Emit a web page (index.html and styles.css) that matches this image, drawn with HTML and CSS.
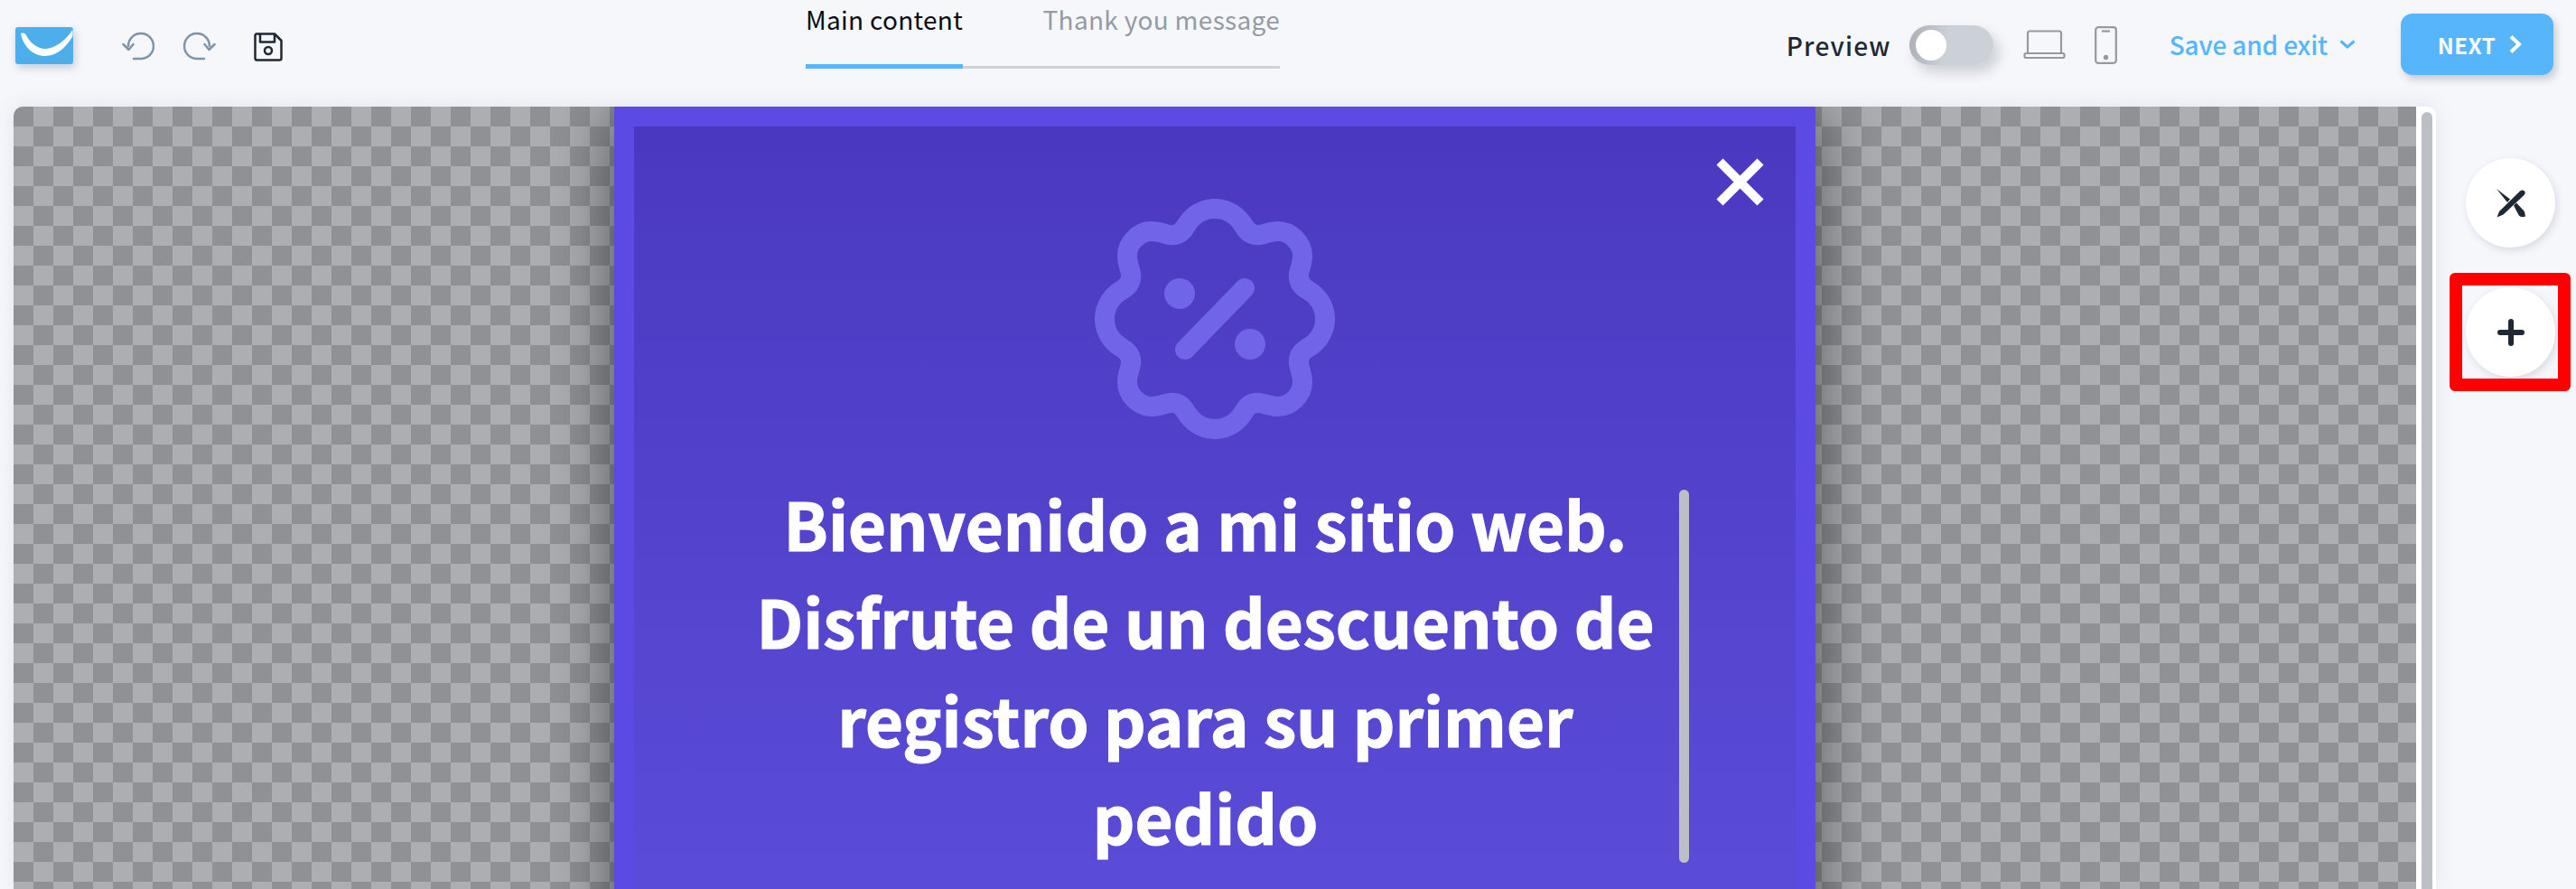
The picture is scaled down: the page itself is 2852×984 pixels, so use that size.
FILE: index.html
```html
<!DOCTYPE html>
<html lang="en">
<head>
    <meta charset="UTF-8">
    <meta name="viewport" content="width=device-width, initial-scale=1.0">
    <title>Popup editor</title>
    <link rel="stylesheet" href="styles.css">
</head>
<body>
    <header class="topbar">
        <div class="tools">
            <svg class="logo" width="64" height="41" viewBox="0 0 64 41">
                <rect width="64" height="41" rx="3" fill="#4daeec"/>
                <path d="M6 7C9 6 11 7 12 9C16 17 24 24 33 24C44 24 56 14 63.500 3V10C56 23 45 32 33 32C20 32 9 22 6 7Z" fill="#fff"/>
            </svg>
            <svg class="undo" width="36" height="32" viewBox="0 0 36 32" fill="none" stroke="#7f94a6" stroke-width="2.500" stroke-linecap="round" stroke-linejoin="round">
                <path d="M13 30H21A14 14 0 1 0 7 16"/>
                <path d="M1.500 14L7.500 20L12.500 14"/>
            </svg>
            <svg class="redo" width="36" height="32" viewBox="0 0 36 32" fill="none" stroke="#7f94a6" stroke-width="2.500" stroke-linecap="round" stroke-linejoin="round">
                <path d="M23 30H15A14 14 0 1 1 29 16"/>
                <path d="M34.500 14L28.500 20L23.500 14"/>
            </svg>
            <svg class="save" width="32" height="32" viewBox="0 0 32 32" fill="none" stroke="#1f2933" stroke-width="2.500" stroke-linejoin="round">
                <path d="M3 1.500H23L30.500 9V28.500A2 2 0 0 1 28.500 30.500H3A2 2 0 0 1 1.500 28.500V3A2 2 0 0 1 3 1.500Z"/>
                <path d="M7 1.500V10.500H23V1.500"/>
                <circle cx="16" cy="20" r="4"/>
            </svg>
        </div>
        <nav class="tabs">
            <a class="tab tab-active">Main content</a>
            <a class="tab">Thank you message</a>
        </nav>
        <div class="actions">
            <span class="preview-label">Preview</span>
            <span class="toggle"><span class="toggle-knob"></span></span>
            <svg class="laptop" width="47" height="32" viewBox="0 0 47 32" fill="none" stroke="#96999d" stroke-width="2.200" stroke-linejoin="round">
                <path d="M5 26V3A2 2 0 0 1 7 1.500H40A2 2 0 0 1 42 3V26"/>
                <rect x="1.500" y="26" width="44" height="5" rx="1.500"/>
            </svg>
            <svg class="phone" width="25" height="42" viewBox="0 0 25 42" fill="none" stroke="#96999d" stroke-width="2.200">
                <rect x="1.200" y="1.200" width="22.600" height="39.600" rx="3"/>
                <path d="M8 5.500H17"/>
                <circle cx="12.500" cy="34.500" r="1.600" fill="#96999d"/>
            </svg>
            <a class="save-exit">Save and exit
                <svg width="18" height="10" viewBox="0 0 18 10" fill="none" stroke="#57b6fb" stroke-width="3">
                    <path d="M1.500 1.500L9 8L16.500 1.500"/>
                </svg>
            </a>
            <button class="next">NEXT
                <svg width="14" height="20" viewBox="0 0 14 20" fill="none" stroke="#fff" stroke-width="4">
                    <path d="M2 1.500L11 10L2 18.500"/>
                </svg>
            </button>
        </div>
    </header>

    <main class="workspace">
        <div class="canvas-frame">
            <div class="canvas">
                <section class="popup">
                    <div class="popup-inner">
                        <svg class="popup-close" width="53" height="53" viewBox="0 0 53 53" stroke="#fff" stroke-width="10">
                            <path d="M4 4L49 49M49 4L4 49"/>
                        </svg>
                        <svg class="badge" width="266" height="268" viewBox="-133 -134 266 268" fill="none" stroke="#7065e8" stroke-width="22" stroke-linecap="round">
                            <defs>
                                <path id="wave" d="M0 -122C15 -122 26 -113 32 -103C36 -96 42 -92 50 -93C56 -94 62 -97 70 -97C84 -97 97 -84 97 -70C97 -62 94 -56 93 -50C92 -42 96 -36 103 -32C113 -26 122 -15 122 0"/>
                            </defs>
                            <use href="#wave"/>
                            <use href="#wave" transform="rotate(90)"/>
                            <use href="#wave" transform="rotate(180)"/>
                            <use href="#wave" transform="rotate(270)"/>
                            <path d="M-33 34L33 -34"/>
                            <circle cx="-39" cy="-28" r="17" fill="#7065e8" stroke="none"/>
                            <circle cx="39" cy="28" r="17" fill="#7065e8" stroke="none"/>
                        </svg>
                        <div class="headline-row">
                            <h1 class="headline">Bienvenido a mi sitio web.<br>Disfrute de un descuento de<br>registro para su primer<br>pedido</h1>
                            <div class="headline-bar"></div>
                        </div>
                    </div>
                </section>
            </div>
            <div class="scroll-track"><div class="scroll-thumb"></div></div>
        </div>
        <aside class="side">
            <button class="round-btn">
                <svg width="34" height="34" viewBox="0 0 34 34" fill="#1f2933">
                    <path d="M1.500 32.500L4 26L27 3.500C28.500 2 30.500 2 32 3.500C33 5 33 6.500 31.500 8L8.500 29.500Z"/>
                    <path d="M1 1L16 12.500L13 16Z"/>
                    <path d="M20 19.500L23 16.500L31 25C32.500 27 33 29.500 32.500 32L28 32C27 31.500 26.500 31 25.500 30Z"/>
                </svg>
            </button>
            <div class="add-wrap">
                <button class="round-btn">
                    <svg width="30" height="30" viewBox="0 0 30 30" stroke="#1f2933" stroke-width="6" stroke-linecap="round">
                        <path d="M15 3V27M3 15H27"/>
                    </svg>
                </button>
                <div class="highlight"></div>
            </div>
        </aside>
    </main>
</body>
</html>
```
FILE: styles.css
```css
html, body { height: 100%; }
body { margin: 0; background: #f5f7fb; font-family: "Noto Sans CJK JP", "Noto Sans", sans-serif; overflow: hidden; }

.topbar { height: 118px; display: grid; grid-template-columns: 892px 525px 1fr; }
.tools { display: flex; align-items: flex-start; padding-left: 17px; }
.logo { margin-top: 30px; filter: drop-shadow(2px 4px 5px rgba(60, 80, 110, .25)); }
.undo { margin: 35px 0 0 54px; }
.redo { margin: 35px 0 0 32px; }
.save { margin: 36px 0 0 42px; }

.tabs { display: flex; justify-content: space-between; height: 76px; border-bottom: 3px solid #cfd2d8; box-sizing: border-box; }
.tab { font-size: 28px; line-height: 42px; height: 73px; letter-spacing: .3px; color: #959ba3; box-sizing: border-box; }
.tab-active { color: #0b0d10; border-bottom: 5px solid #57b6fb; height: 76px; }

.actions { display: flex; align-items: flex-start; justify-content: flex-end; padding-right: 25px; }
.preview-label { margin-top: 29px; font-size: 28px; line-height: 42px; font-weight: 500; letter-spacing: 1.200px; color: #1f2933; }
.toggle { width: 93px; height: 44px; margin: 28px 0 0 20px; padding: 5px 7px; box-sizing: border-box; border-radius: 22px; background: linear-gradient(100deg, #a9afb4, #cbd1d7 45%); box-shadow: 6px 8px 14px rgba(60, 70, 90, .22); }
.toggle-knob { display: block; width: 34px; height: 34px; border-radius: 50%; background: #fff; }
.laptop { margin: 33px 0 0 33px; }
.phone { margin: 29px 0 0 32px; }
.save-exit { display: flex; align-items: center; gap: 13px; height: 42px; margin: 28px 0 0 58px; font-size: 28px; font-weight: 500; letter-spacing: -.15px; color: #57b6fb; }
.next { display: flex; align-items: center; justify-content: center; gap: 15px; width: 169px; height: 68px; margin: 15px 0 0 50px; padding: 0 0 0 6px; border: none; border-radius: 13px; background: #57b6fb; box-shadow: 3px 5px 8px rgba(60, 70, 90, .25); color: #fff; font-family: inherit; font-size: 24px; font-weight: 700; letter-spacing: .6px; }

.workspace { display: flex; height: 866px; padding-left: 15px; }
.canvas-frame { display: flex; width: 2682px; background: #fff; border-radius: 10px 10px 0 0; overflow: hidden; box-shadow: 0 0 24px rgba(60, 70, 90, .1); }
.canvas { width: 2660px; display: flex; justify-content: center; overflow: hidden; background: conic-gradient(#adaeb2 25%, #909195 0 50%, #adaeb2 0 75%, #909195 0) 0 0 / 44px 44px; }
.scroll-track { flex: 1; padding: 6px 4px 0 6px; }
.scroll-thumb { height: 100%; border-radius: 6px 6px 0 0; background: #bcc0c6; }

.popup { flex: none; width: 1330px; height: 940px; padding: 22px; box-sizing: border-box; background: #5c4ae5; box-shadow: 0 0 70px rgba(0, 0, 0, .55); }
.popup-inner { position: relative; height: 100%; display: flex; flex-direction: column; background: linear-gradient(#4a39c0, #5c4dd9); padding-top: 79px; box-sizing: border-box; }
.popup-close { position: absolute; top: 35px; right: 35px; }
.badge { flex: none; align-self: center; }
.headline-row { flex: none; display: flex; margin-top: 55px; padding: 0 118px 0 108px; }
.headline { flex: 1; margin: -17px 0 0; text-align: center; font-size: 72.500px; line-height: 108.300px; font-weight: 700; -webkit-text-stroke: 1.200px #fff; color: #fff; }
.headline-bar { flex: none; width: 11px; height: 413px; border-radius: 6px; background: #bcc0c6; }

.side { display: flex; flex-direction: column; gap: 44px; padding: 57px 0 0 33px; }
.round-btn { display: flex; align-items: center; justify-content: center; width: 99px; height: 99px; padding: 0; border: none; border-radius: 50%; background: #fff; box-shadow: 2px 3px 8px rgba(60, 70, 90, .16); }
.add-wrap { position: relative; }
.highlight { position: absolute; top: -16px; left: -18px; right: -17px; bottom: -16px; border: 14px solid #f00; border-radius: 6px; }
```
